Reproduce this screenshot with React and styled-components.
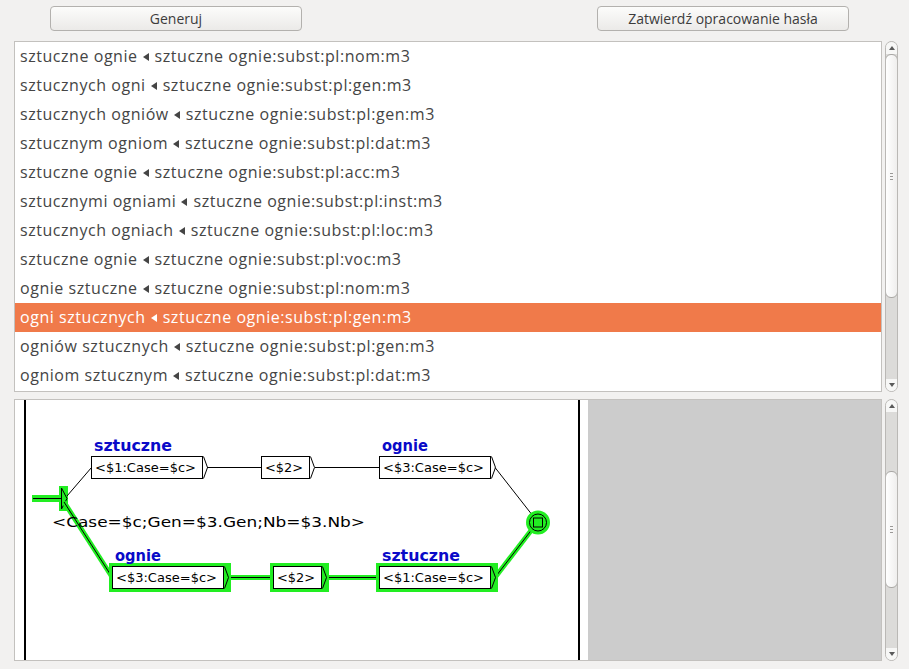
import React from "react";
import styled, { createGlobalStyle } from "styled-components";

const GlobalStyle = createGlobalStyle`
  html, body { margin: 0; padding: 0; background: #f2f1f0; }
  body { font-family: "Open Sans", "DejaVu Sans", sans-serif; }
`;

const Page = styled.div`
  width: 909px;
  height: 669px;
  background: #f2f1f0;
  overflow: hidden;
  display: flex;
  flex-direction: column;
`;

const Toolbar = styled.div`
  height: 41px;
  box-sizing: border-box;
  padding: 6px 0 0 50px;
  display: grid;
  grid-template-columns: 252px 252px;
  column-gap: 295px;
  align-items: start;
`;

const Button = styled.button`
  height: 25px;
  margin: 0;
  padding: 0;
  border: 1px solid #b3b1ae;
  border-radius: 4px;
  background: linear-gradient(#fcfcfb, #ebeae8);
  font-family: "Open Sans", "DejaVu Sans", sans-serif;
  font-size: 14px;
  color: #3c3c3c;
  line-height: 23px;
`;

const Row = styled.div`
  display: flex;
  gap: 3px;
  padding-left: 14px;
  margin-top: ${(p) => p.$mt || 0}px;
`;

const Panel = styled.div`
  width: 868px;
  height: ${(p) => p.$h}px;
  box-sizing: border-box;
  border: 1px solid #c3c1be;
  background: #fff;
  overflow: hidden;
  display: flex;
  flex-direction: ${(p) => (p.$dir === "row" ? "row" : "column")};
`;

const ListItem = styled.div`
  height: 29px;
  flex: none;
  padding-left: 5px;
  display: flex;
  align-items: center;
  font-family: "Open Sans", "DejaVu Sans", sans-serif;
  font-size: 16px;
  letter-spacing: 0.55px;
  line-height: 27px;
  color: ${(p) => (p.$sel ? "#ffffff" : "#454545")};
  background: ${(p) => (p.$sel ? "#f07a4a" : "transparent")};
  white-space: pre;
`;

const Tri = styled.span`
  width: 0;
  height: 0;
  border-top: 4px solid transparent;
  border-bottom: 4px solid transparent;
  border-right: 6px solid currentColor;
  margin: 1px 6px 0 5px;
`;

const Canvas = styled.div`
  width: 573px;
  height: 100%;
  flex: none;
  background: #fff;
`;

const GreyFill = styled.div`
  flex: 1;
  background: #cccccc;
`;

const ScrollTrack = styled.div`
  width: 13px;
  height: ${(p) => p.$h}px;
  box-sizing: border-box;
  border: 1px solid #bab8b5;
  border-radius: 7px;
  background: #dcdbd9;
  display: flex;
  flex-direction: column;
  overflow: hidden;
`;

const ArrowCap = styled.div`
  height: 12px;
  flex: none;
  background: #f7f7f6;
  display: flex;
  align-items: center;
  justify-content: center;
`;

const ArrowUp = styled.span`
  width: 0;
  height: 0;
  border-left: 3px solid transparent;
  border-right: 3px solid transparent;
  border-bottom: 4px solid #5a5a5a;
`;

const ArrowDown = styled.span`
  width: 0;
  height: 0;
  border-left: 3px solid transparent;
  border-right: 3px solid transparent;
  border-top: 4px solid #5a5a5a;
`;

const Trough = styled.div`
  flex: 1;
  display: flex;
  flex-direction: column;
  padding-top: ${(p) => p.$offset}px;
`;

const Thumb = styled.div`
  height: ${(p) => p.$h}px;
  flex: none;
  box-sizing: border-box;
  border: 1px solid #a9a7a4;
  border-radius: 6px;
  margin: 0 -1px;
  background: linear-gradient(to right, #ffffff, #efeeed);
  display: flex;
  align-items: center;
  justify-content: center;
`;

const Grip = styled.span`
  width: 3px;
  height: 7px;
  background: repeating-linear-gradient(#9a9896 0 1px, transparent 1px 3px);
`;

function Scrollbar({ h, thumbOffset, thumbH }) {
  return (
    <ScrollTrack $h={h}>
      <ArrowCap>
        <ArrowUp />
      </ArrowCap>
      <Trough $offset={thumbOffset}>
        <Thumb $h={thumbH}>
          <Grip />
        </Thumb>
      </Trough>
      <ArrowCap>
        <ArrowDown />
      </ArrowCap>
    </ScrollTrack>
  );
}

const items = [
  ["sztuczne ognie", "sztuczne ognie:subst:pl:nom:m3"],
  ["sztucznych ogni", "sztuczne ognie:subst:pl:gen:m3"],
  ["sztucznych ogniów", "sztuczne ognie:subst:pl:gen:m3"],
  ["sztucznym ogniom", "sztuczne ognie:subst:pl:dat:m3"],
  ["sztuczne ognie", "sztuczne ognie:subst:pl:acc:m3"],
  ["sztucznymi ogniami", "sztuczne ognie:subst:pl:inst:m3"],
  ["sztucznych ogniach", "sztuczne ognie:subst:pl:loc:m3"],
  ["sztuczne ognie", "sztuczne ognie:subst:pl:voc:m3"],
  ["ognie sztuczne", "sztuczne ognie:subst:pl:nom:m3"],
  ["ogni sztucznych", "sztuczne ognie:subst:pl:gen:m3"],
  ["ogniów sztucznych", "sztuczne ognie:subst:pl:gen:m3"],
  ["ogniom sztucznym", "sztuczne ognie:subst:pl:dat:m3"],
];

const GREEN = "#22ee22";

function GBox({ x, y, w, text, label, active, tl }) {
  const h = 22;
  return (
    <g>
      {active && <rect x={x - 3} y={y - 3} width={w + 11} height={h + 7} fill={GREEN} />}
      <rect x={x + 0.5} y={y + 0.5} width={w} height={h} fill="#fff" stroke="#000" strokeWidth="1" />
      <path
        d={`M${x + w + 1.5} ${y + 0.5} L${x + w + 5.5} ${y + h / 2 + 0.5} L${x + w + 1.5} ${y + h + 0.5}`}
        fill="none"
        stroke="#000"
        strokeWidth="1"
      />
      <text
        x={x + 4}
        y={y + 15.5}
        fontFamily="'DejaVu Sans', sans-serif"
        fontSize="11.5"
        fill="#000"
        textLength={tl}
        lengthAdjust="spacingAndGlyphs"
      >
        {text}
      </text>
      {label && (
        <text
          x={x + 3}
          y={y - 5}
          fontFamily="'DejaVu Sans', sans-serif"
          fontWeight="bold"
          fontSize="15"
          fill="#0a0ac8"
          textLength={label === "sztuczne" ? 78 : 46}
          lengthAdjust="spacingAndGlyphs"
        >
          {label}
        </text>
      )}
    </g>
  );
}

function GLine({ x1, y1, x2, y2, active }) {
  return (
    <g>
      {active && <line x1={x1} y1={y1} x2={x2} y2={y2} stroke={GREEN} strokeWidth="5" />}
      <line x1={x1} y1={y1} x2={x2} y2={y2} stroke="#000" strokeWidth="1" />
    </g>
  );
}

function Graph() {
  return (
    <svg width="573" height="260" viewBox="15 400 573 260" style={{ display: "block" }}>
      <line x1="25" y1="400" x2="25" y2="660" stroke="#000" strokeWidth="2" />
      <line x1="579" y1="400" x2="579" y2="660" stroke="#000" strokeWidth="2" />

      {/* initial state */}
      <rect x="32" y="495" width="30" height="7" fill={GREEN} />
      <rect x="59" y="486" width="9" height="25" fill={GREEN} />
      <line x1="33" y1="498.5" x2="61" y2="498.5" stroke="#000" strokeWidth="1" />
      <path d="M61.5 488 L61.5 509 L67 498.5 Z" fill="none" stroke="#000" strokeWidth="1" />

      {/* upper path */}
      <GLine x1={67} y1={496} x2={91.5} y2={467.5} />
      <GLine x1={207} y1={467.5} x2={261} y2={467.5} />
      <GLine x1={315} y1={467.5} x2={379} y2={467.5} />
      <GLine x1={495} y1={467.5} x2={533} y2={516} />

      {/* lower path */}
      <GLine x1={64} y1={502} x2={112} y2={577} active />
      <GLine x1={228} y1={577.5} x2={273} y2={577.5} active />
      <GLine x1={326} y1={577.5} x2={379} y2={577.5} active />
      <GLine x1={495} y1={577.5} x2={533} y2={528} active />

      <GBox x={91} y={456} w={111} text="<$1:Case=$c>" tl={101} label="sztuczne" />
      <GBox x={261} y={456} w={48} text="<$2>" tl={38} />
      <GBox x={379} y={456} w={111} text="<$3:Case=$c>" tl={101} label="ognie" />

      <GBox x={112} y={566} w={111} text="<$3:Case=$c>" tl={101} label="ognie" active />
      <GBox x={273} y={566} w={48} text="<$2>" tl={38} active />
      <GBox x={379} y={566} w={111} text="<$1:Case=$c>" tl={101} label="sztuczne" active />

      {/* final state */}
      <circle cx="538" cy="522.5" r="12" fill={GREEN} />
      <circle cx="538" cy="522.5" r="8.5" fill="none" stroke="#000" strokeWidth="1" />
      <rect x="533.5" y="518" width="9" height="9" fill="none" stroke="#000" strokeWidth="1" />

      <text
        x="52"
        y="527"
        fontFamily="'DejaVu Sans', sans-serif"
        fontSize="14.5"
        fill="#000"
        textLength="313"
        lengthAdjust="spacingAndGlyphs"
      >
        {"<Case=$c;Gen=$3.Gen;Nb=$3.Nb>"}
      </text>
    </svg>
  );
}

export default function App() {
  return (
    <Page>
      <GlobalStyle />
      <Toolbar>
        <Button>Generuj</Button>
        <Button>Zatwierdź opracowanie hasła</Button>
      </Toolbar>
      <Row>
        <Panel $h={351}>
          {items.map(([form, lemma], i) => (
            <ListItem key={i} $sel={i === 9}>
              {form}
              <Tri />
              {lemma}
            </ListItem>
          ))}
        </Panel>
        <Scrollbar h={351} thumbOffset={0} thumbH={244} />
      </Row>
      <Row $mt={7}>
        <Panel $h={262} $dir="row">
          <Canvas>
            <Graph />
          </Canvas>
          <GreyFill />
        </Panel>
        <Scrollbar h={262} thumbOffset={59} thumbH={117} />
      </Row>
    </Page>
  );
}
